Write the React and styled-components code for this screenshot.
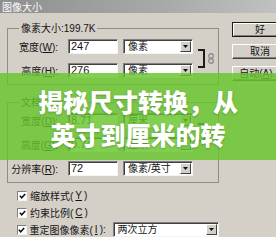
import React from 'react'
import styled, { createGlobalStyle } from 'styled-components'

const GlobalStyle = createGlobalStyle`
  html, body {
    margin: 0;
    padding: 0;
    overflow: hidden;
    background: #d4d0c8;
  }
  body {
    width: 276px;
    height: 237px;
    font-family: "Liberation Sans", "Noto Sans CJK SC", sans-serif;
  }
`

const Window = styled.div`
  position: relative;
  width: 300px;
  height: 237px;
  background: #d4d0c8;
  color: #141414;
  font-size: 10px;
  overflow: hidden;
`

const TitleBar = styled.div`
  height: 13px;
  padding-left: 2px;
  background: linear-gradient(90deg, #8f8f8f 0%, #a9a9a9 55%, #c6c6c6 100%);
  color: #fff;
  font-family: "Noto Sans CJK SC", sans-serif;
  font-size: 10px;
  line-height: 13px;
`

const Body = styled.div`
  display: flex;
  gap: 13px;
  padding: 9px 0 0 7px;
`

const LeftColumn = styled.div`
  display: flex;
  flex-direction: column;
  width: 212px;
`

const Group = styled.fieldset`
  margin: 0;
  padding: 4px 0 6px 0;
  border: 1px solid #8e8c87;
  min-width: 0;
  & + & {
    margin-top: 11px;
  }
`

const Legend = styled.legend`
  margin-left: 11px;
  padding: 0 2px;
  line-height: 13px;
`

const Rows = styled.div`
  display: grid;
  grid-template-columns: 55px 50px 70px 18px;
  column-gap: 5px;
  row-gap: 9px;
  align-items: center;
`

const Label = styled.span`
  text-align: right;
  padding-right: 5px;
  white-space: nowrap;
`

const Sunken = styled.div`
  box-sizing: border-box;
  height: 15px;
  background: #fff;
  border: 1px solid;
  border-color: #808080 #f4f4f4 #f4f4f4 #808080;
  box-shadow: inset 1px 1px 0 #404040;
  font-size: 11px;
  line-height: 13px;
`

const Field = styled(Sunken)`
  padding-left: 2px;
`

const Select = styled(Sunken)`
  display: flex;
  align-items: center;
  justify-content: space-between;
  padding: 0 1px 0 4px;
  width: ${({ $w }) => $w || 70}px;
  font-size: 10px;
`

const Arrow = styled.span`
  display: flex;
  align-items: center;
  justify-content: center;
  box-sizing: border-box;
  width: 11px;
  height: 11px;
  background: #d4d0c8;
  border: 1px solid;
  border-color: #fff #404040 #404040 #fff;
`

const Link = styled.div`
  grid-column: 4;
  grid-row: 1 / span 2;
  display: flex;
  align-items: center;
  gap: 3px;
`

const Bracket = styled.div`
  width: 5px;
  height: 15px;
  border: 2px solid #1a1a1a;
  border-left: none;
`

const Options = styled.div`
  display: flex;
  flex-direction: column;
  margin-top: 4px;
  padding-left: 10px;
`

const Option = styled.div`
  display: flex;
  align-items: center;
  gap: 2px;
  height: 17px;
  white-space: nowrap;
`

const Box = styled.span`
  display: flex;
  align-items: center;
  justify-content: center;
  box-sizing: border-box;
  width: 10px;
  height: 10px;
  background: #fff;
  border: 1px solid;
  border-color: #808080 #f4f4f4 #f4f4f4 #808080;
  margin-right: 1px;
`

const RightColumn = styled.div`
  display: flex;
  flex-direction: column;
  gap: 7px;
`

const Button = styled.div`
  box-sizing: border-box;
  width: 56px;
  height: 15px;
  border: 1px solid;
  border-color: ${({ $default }) => ($default ? '#1a1a1a' : '#fff #404040 #404040 #fff')};
  box-shadow: ${({ $default }) =>
    $default ? 'inset 1px 1px 0 #fff, inset -1px -1px 0 #808080' : 'inset -1px -1px 0 #808080'};
  text-align: center;
  line-height: 13px;
  font-size: 10px;
`

const Banner = styled.div`
  position: absolute;
  left: 0;
  top: 73px;
  width: 276px;
  height: 87px;
  display: flex;
  flex-direction: column;
  align-items: center;
  justify-content: center;
  background: rgba(104, 196, 44, 0.82);
  color: #fff;
  font-family: "Noto Sans CJK SC", sans-serif;
  font-weight: 900;
  font-size: 25px;
  line-height: 33px;
  text-shadow: 0 1px 2px rgba(40, 80, 20, 0.35);
  padding-top: 3px;
  box-sizing: border-box;
`

const DownIcon = () => (
  <svg width="5" height="3" viewBox="0 0 5 3">
    <path d="M0 0h5L2.5 3z" fill="#111" />
  </svg>
)

const ChainIcon = () => (
  <svg width="6" height="11" viewBox="0 0 6 11">
    <rect x="0.75" y="0.75" width="4.5" height="4.5" rx="2" fill="none" stroke="#8a8a8a" strokeWidth="1.3" />
    <rect x="0.75" y="5.75" width="4.5" height="4.5" rx="2" fill="none" stroke="#8a8a8a" strokeWidth="1.3" />
  </svg>
)

const CheckIcon = () => (
  <svg width="7" height="6" viewBox="0 0 7 6">
    <path d="M0.8 2.8L2.7 4.8L6.2 0.9" fill="none" stroke="#111" strokeWidth="1.5" />
  </svg>
)

const Dropdown = ({ value, w }) => (
  <Select $w={w}>
    <span>{value}</span>
    <Arrow><DownIcon /></Arrow>
  </Select>
)

const pixelRows = [
  { label: '宽度', key: 'W', value: '247', unit: '像素' },
  { label: '高度', key: 'H', value: '276', unit: '像素' },
]

const docRows = [
  { label: '宽度', key: 'D', value: '8.71', unit: '厘米' },
  { label: '高度', key: 'G', value: '9.74', unit: '厘米' },
  { label: '分辨率', key: 'R', value: '72', unit: '像素/英寸' },
]

const SizeRows = ({ rows }) => (
  <Rows>
    {rows.map((r) => (
      <React.Fragment key={r.key}>
        <Label>{r.label}(<u>{r.key}</u>):</Label>
        <Field>{r.value}</Field>
        <Dropdown value={r.unit} />
      </React.Fragment>
    ))}
    <Link>
      <Bracket />
      <ChainIcon />
    </Link>
  </Rows>
)

export default function App() {
  return (
    <Window>
      <GlobalStyle />
      <TitleBar>图像大小</TitleBar>
      <Body>
        <LeftColumn>
          <Group>
            <Legend>像素大小:199.7K</Legend>
            <SizeRows rows={pixelRows} />
          </Group>
          <Group>
            <Legend>文档大小:</Legend>
            <SizeRows rows={docRows} />
          </Group>
          <Options>
            <Option><Box><CheckIcon /></Box>缩放样式(<u>Y</u>)</Option>
            <Option><Box><CheckIcon /></Box>约束比例(<u>C</u>)</Option>
            <Option>
              <Box><CheckIcon /></Box>重定图像像素(<u>I</u>):
              <span style={{ width: 3 }} />
              <Dropdown value="两次立方" w={113} />
            </Option>
          </Options>
        </LeftColumn>
        <RightColumn>
          <Button $default>好</Button>
          <Button>取消</Button>
          <Button>自动(<u>A</u>)...</Button>
        </RightColumn>
      </Body>
      <Banner>
        <div>揭秘尺寸转换，从</div>
        <div>英寸到厘米的转</div>
      </Banner>
    </Window>
  )
}
